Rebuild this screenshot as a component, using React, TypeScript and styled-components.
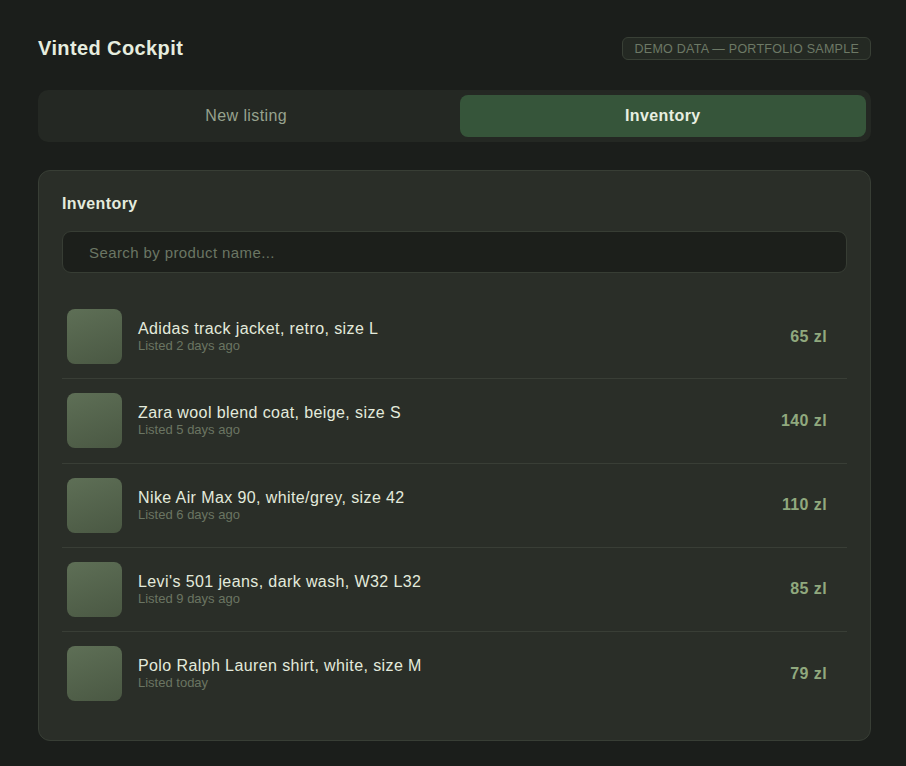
import React from "react";
import styled, { createGlobalStyle } from "styled-components";

const Global = createGlobalStyle`
  html, body { margin: 0; padding: 0; background: #1b1e1b; }
  body { font-family: "Liberation Sans", Arial, Helvetica, sans-serif; color: #e4ebdd; letter-spacing: 0.025em; }
  * { box-sizing: border-box; }
`;

const Page = styled.div`
  padding: 37px 35px 26px 38px;
  min-height: 766px;
`;

const Header = styled.header`
  display: flex;
  align-items: center;
  justify-content: space-between;
  height: 23px;
`;

const Title = styled.h1`
  margin: 0;
  font-size: 20px;
  font-weight: 700;
  color: #e6eddf;
`;

const Badge = styled.span`
  display: inline-flex;
  align-items: center;
  height: 23px;
  padding: 0 11px 0 11.5px;
  border: 1px solid #394036;
  border-radius: 6px;
  background: #242923;
  color: #6d7966;
  font-size: 12.5px;
  letter-spacing: 0.02em;
  text-transform: uppercase;
`;

const Tabs = styled.nav`
  margin-top: 30px;
  display: grid;
  grid-template-columns: 1fr 1fr;
  gap: 10px;
  padding: 5px;
  height: 52px;
  background: #242823;
  border-radius: 10px;
`;

const Tab = styled.button<{ $active?: boolean }>`
  border: 0;
  border-radius: 8px;
  font-family: inherit;
  letter-spacing: inherit;
  font-size: 16px;
  font-weight: ${(p) => (p.$active ? 700 : 400)};
  color: ${(p) => (p.$active ? "#e8efe1" : "#97a28e")};
  background: ${(p) => (p.$active ? "#36553a" : "transparent")};
  cursor: pointer;
`;

const Card = styled.section`
  margin-top: 28px;
  background: #2a2e28;
  border: 1px solid #383e35;
  border-radius: 12px;
  padding: 23px 23px 25px 23px;
`;

const CardTitle = styled.h2`
  margin: 0 0 18px;
  font-size: 16px;
  line-height: 19px;
  font-weight: 700;
  color: #e4ebdd;
`;

const Search = styled.input`
  display: block;
  width: 100%;
  height: 42px;
  padding: 0 26px;
  background: #1c1f1b;
  border: 1px solid #373d34;
  border-radius: 9px;
  font-family: inherit;
  letter-spacing: inherit;
  font-size: 15px;
  color: #e4ebdd;
  outline: none;
  &::placeholder { color: #6b7664; }
`;

const List = styled.ul`
  list-style: none;
  margin: 22px 0 0;
  padding: 0;
`;

const Row = styled.li`
  display: flex;
  align-items: center;
  gap: 16px;
  padding: 14.15px 20px 14.15px 5px;
  border-bottom: 1px solid #393e36;
  &:last-child { border-bottom: 0; }
`;

const Thumb = styled.div`
  width: 55px;
  height: 55px;
  flex: none;
  border-radius: 8px;
  background: linear-gradient(160deg, #5e6f56 0%, #4a5843 100%);
`;

const Info = styled.div`
  flex: 1;
  display: flex;
  flex-direction: column;
  min-width: 0;
`;

const Name = styled.div`
  font-size: 16px;
  line-height: 18px;
  color: #e3eadc;
`;

const Meta = styled.div`
  font-size: 13px;
  line-height: 15px;
  letter-spacing: 0;
  color: #6a7562;
`;

const Price = styled.div`
  font-size: 16px;
  font-weight: 700;
  color: #90a97e;
`;

const items = [
  { name: "Adidas track jacket, retro, size L", meta: "Listed 2 days ago", price: "65 zl" },
  { name: "Zara wool blend coat, beige, size S", meta: "Listed 5 days ago", price: "140 zl" },
  { name: "Nike Air Max 90, white/grey, size 42", meta: "Listed 6 days ago", price: "110 zl" },
  { name: "Levi's 501 jeans, dark wash, W32 L32", meta: "Listed 9 days ago", price: "85 zl" },
  { name: "Polo Ralph Lauren shirt, white, size M", meta: "Listed today", price: "79 zl" },
];

export default function App() {
  return (
    <>
      <Global />
      <Page>
        <Header>
          <Title>Vinted Cockpit</Title>
          <Badge>Demo data — portfolio sample</Badge>
        </Header>
        <Tabs>
          <Tab>New listing</Tab>
          <Tab $active>Inventory</Tab>
        </Tabs>
        <Card>
          <CardTitle>Inventory</CardTitle>
          <Search placeholder="Search by product name..." />
          <List>
            {items.map((it) => (
              <Row key={it.name}>
                <Thumb />
                <Info>
                  <Name>{it.name}</Name>
                  <Meta>{it.meta}</Meta>
                </Info>
                <Price>{it.price}</Price>
              </Row>
            ))}
          </List>
        </Card>
      </Page>
    </>
  );
}
